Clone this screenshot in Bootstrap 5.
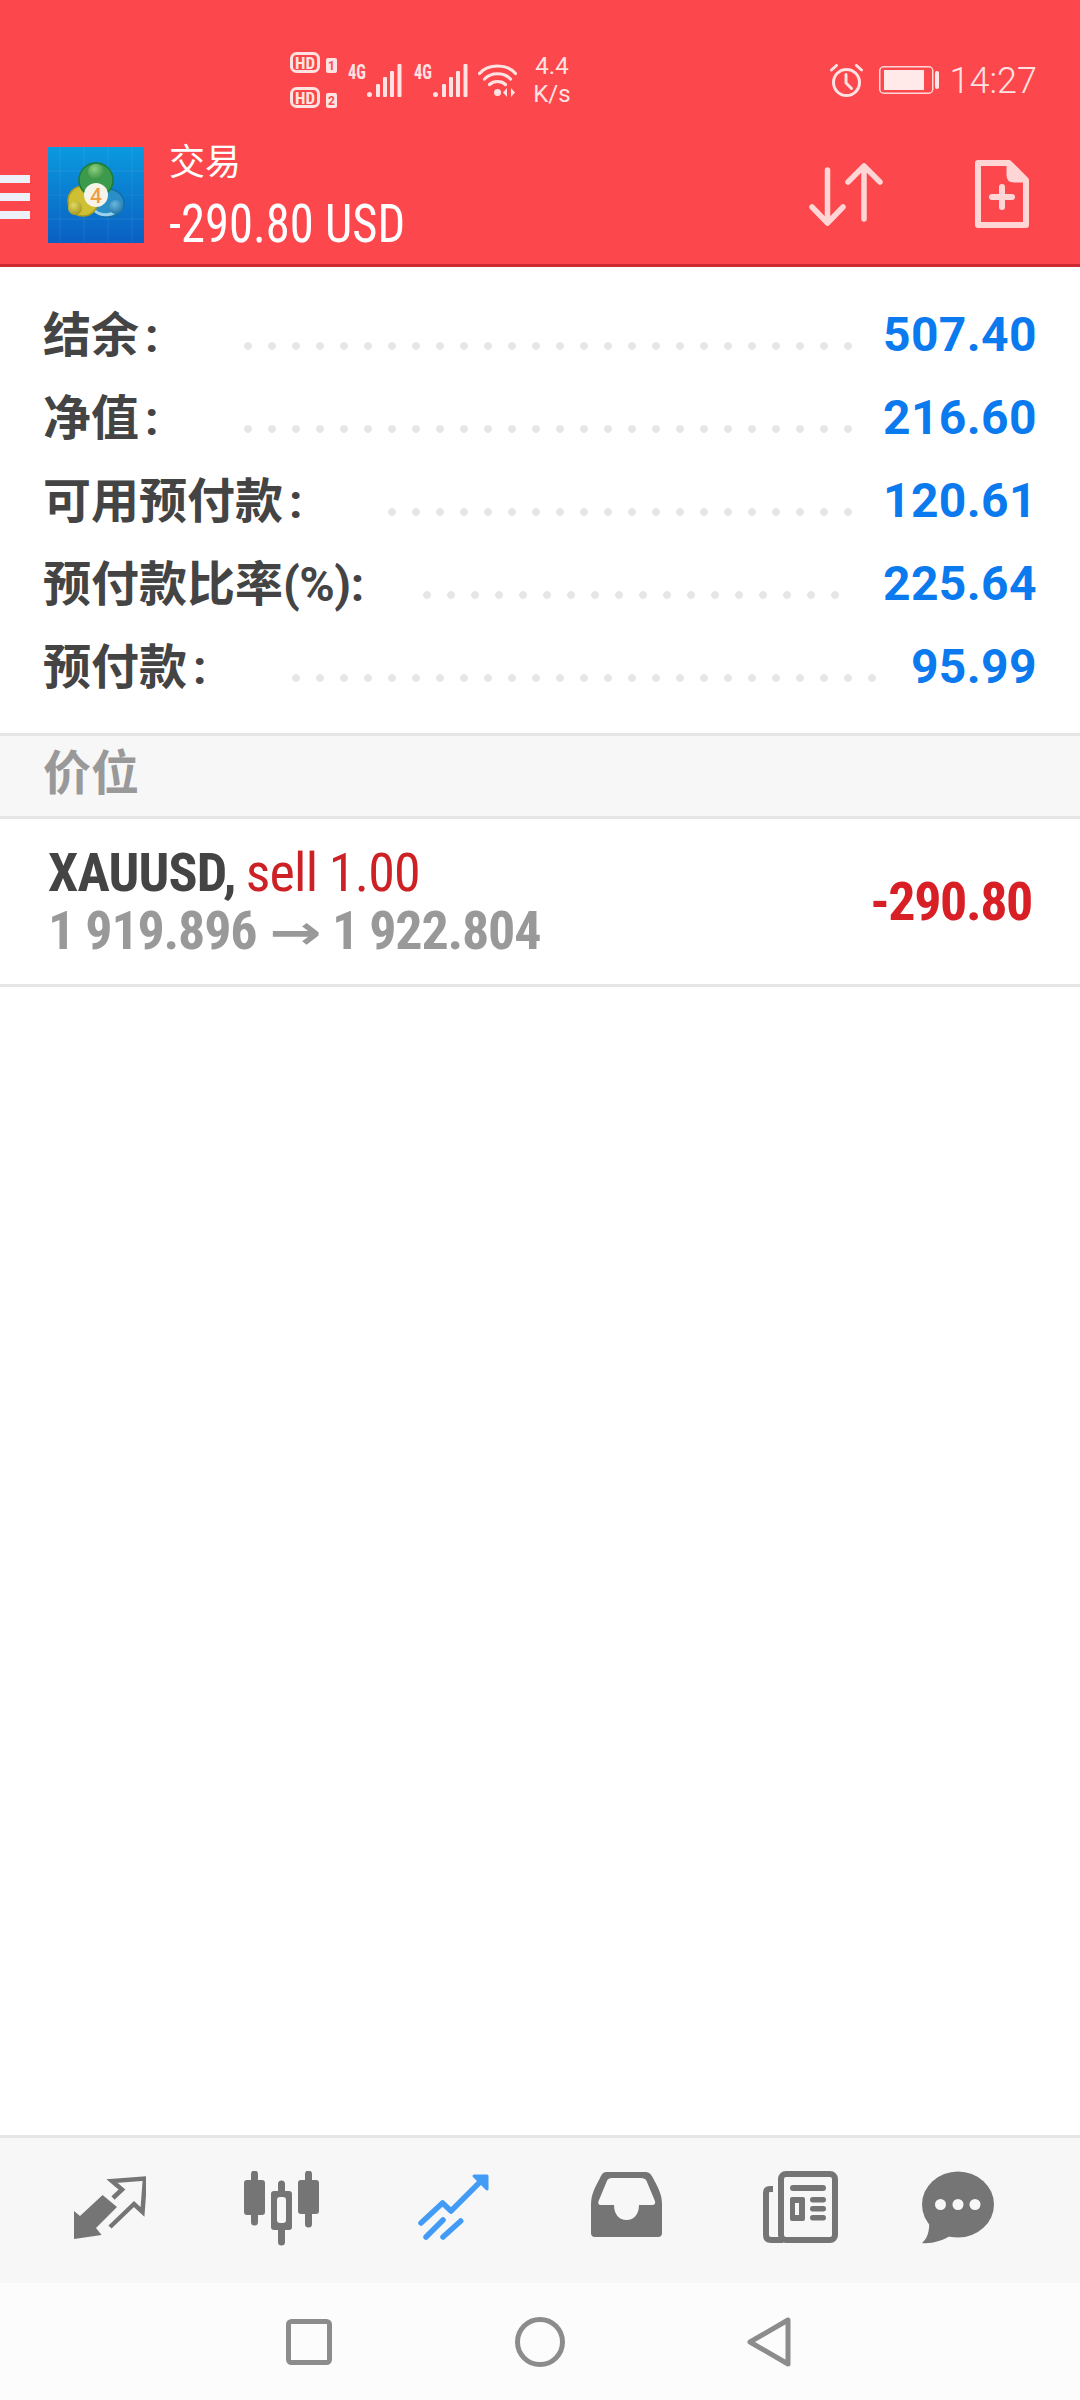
<!DOCTYPE html>
<html lang="zh">
<head>
<meta charset="utf-8">
<title>交易</title>
<link href="https://cdn.jsdelivr.net/npm/bootstrap@5.3.0/dist/css/bootstrap.min.css" rel="stylesheet">
<style>
html,body{width:1080px;height:2400px;margin:0;overflow:hidden}
body{font-family:Roboto,"Noto Sans CJK SC",sans-serif;background:#fff}
.shell{height:2400px}
.hdr{height:267px;background:#fc474c;border-bottom:3px solid #cc2b2f;color:#fff}
.sbar{height:130px;padding:30px 43px 0 290px}
.sbar svg{display:block;flex:none}
.sig{margin-top:-7px}
.narrowtxt{font-family:Roboto,sans-serif;font-stretch:75%;font-weight:700;font-size:20px}
.hdtxt{font-family:Roboto,sans-serif;font-stretch:75%;font-weight:700;font-size:17px}
.speed{font-size:24px;line-height:28px;color:#ffe2e2;text-align:center;margin-left:15px;width:40px}
.clock{font-size:36px;font-weight:300;color:#ffe2e2;line-height:1;margin-left:11px;margin-top:2px}
.alarm{margin-left:auto;margin-right:16px}
.tbar{height:132px;padding-right:51px}
.burger{width:30px;height:44px;margin-top:45px;background:linear-gradient(#edf0f8 8px,transparent 8px 18px,#edf0f8 18px 26px,transparent 26px 36px,#edf0f8 36px);flex:none}
.logo{margin:17px 0 0 18px;flex:none}
.ttl{margin:11px 0 0 25px}
.ttl1{font-size:36px;line-height:36px;font-family:"Noto Sans CJK SC",sans-serif;font-weight:400}
.ttl2{font-family:Roboto,sans-serif;font-stretch:75%;font-size:54px;line-height:54px;margin-top:20px;transform:scaleX(.9);transform-origin:0 50%;white-space:nowrap}
.acts{margin-top:30px;gap:90px;margin-left:auto}
.acc{padding:25px 43px 26px 43px}
.arow{height:83px}
.alabel{font-family:Roboto,"Noto Sans CJK SC",sans-serif;font-weight:700;font-size:48px;line-height:81px;padding-top:3px;color:#444;white-space:nowrap}
.alabel .colon{margin-left:6px}
.pct{letter-spacing:-.5px}
.leader{height:8px;margin-top:50px;margin-left:auto;flex:none;background:radial-gradient(circle,#e6e6e6 3.5px,transparent 4.2px) 0 0/24px 8px repeat-x}
.n26{width:624px;margin-right:23px}
.n20{width:480px;margin-right:23px}
.n18{width:432px;margin-right:36px}
.n25{width:600px;margin-right:27px}
.aval{font-weight:700;font-size:48px;line-height:83px;color:#0a7aee;flex:none;margin-top:1px;letter-spacing:.4px}
.sect{height:86px;background:#f7f7f7;border-top:3px solid #e6e6e6;border-bottom:3px solid #e6e6e6;padding-left:43px;font-family:"Noto Sans CJK SC",sans-serif;font-weight:700;font-size:48px;line-height:66px;color:#999}
.pos{height:168px;border-bottom:3px solid #e6e6e6;padding:0 48px 0 48px}
.pline{font-family:Roboto,sans-serif;font-stretch:75%;font-size:54px;line-height:58px;white-space:nowrap}
.first{letter-spacing:-.8px}
.sym{font-weight:700;color:#444}
.side{color:#cc2226;margin-left:10px}
.prc{font-weight:700;color:#999;letter-spacing:-1.2px}
.arrow{display:inline-block;font-family:"DejaVu Sans",sans-serif;font-stretch:normal;font-size:48px;line-height:48px;transform:scaleX(1.3);margin:0 7px}
.pl{font-family:Roboto,sans-serif;font-stretch:75%;font-weight:700;font-size:54px;color:#d81f26;letter-spacing:-1.4px}
.tabs{height:148px;background:#f7f7f7;border-top:3px solid #e6e6e6;padding-left:24px}
.tabs svg{flex:none;display:block}
.tabbox{width:172px;padding-top:33px}
.navb{height:117px;background:#fcfcfc;padding-left:286px}
</style>
</head>
<body>
<div class="shell d-flex flex-column">
  <header class="hdr">
    <div class="sbar d-flex align-items-center">
      <svg width="47" height="56" viewBox="0 0 47 56" fill="#ffe2e2">
        <rect x="1.5" y="1.5" width="27" height="18" rx="5" fill="none" stroke="#ffe2e2" stroke-width="3"/>
        <text x="15" y="16.500" text-anchor="middle" class="hdtxt">HD</text>
        <rect x="36" y="6" width="11" height="15" rx="2"/>
        <text x="41.500" y="18" text-anchor="middle" font-family="Roboto" font-weight="700" font-size="12" fill="#fc474c">1</text>
        <rect x="1.5" y="36.5" width="27" height="18" rx="5" fill="none" stroke="#ffe2e2" stroke-width="3"/>
        <text x="15" y="51.500" text-anchor="middle" class="hdtxt">HD</text>
        <rect x="36" y="41" width="11" height="15" rx="2"/>
        <text x="41.500" y="53" text-anchor="middle" font-family="Roboto" font-weight="700" font-size="12" fill="#fc474c">2</text>
      </svg>
      <svg class="sig" style="margin-left:11px" width="54" height="40" viewBox="0 -7 54 40" fill="#ffe2e2">
        <text x="0" y="15" class="narrowtxt" textLength="18" lengthAdjust="spacingAndGlyphs">4G</text>
        <rect x="19" y="28" width="5" height="5" rx="2.5"/><rect x="28" y="20" width="4" height="13" rx="1"/><rect x="35" y="13" width="4" height="20" rx="1"/><rect x="42" y="7" width="4" height="26" rx="1"/><rect x="49.500" y="0" width="4" height="33" rx="1"/>
      </svg>
      <svg class="sig" style="margin-left:12px" width="54" height="40" viewBox="0 -7 54 40" fill="#ffe2e2">
        <text x="0" y="15" class="narrowtxt" textLength="18" lengthAdjust="spacingAndGlyphs">4G</text>
        <rect x="19" y="28" width="5" height="5" rx="2.5"/><rect x="28" y="20" width="4" height="13" rx="1"/><rect x="35" y="13" width="4" height="20" rx="1"/><rect x="42" y="7" width="4" height="26" rx="1"/><rect x="49.500" y="0" width="4" height="33" rx="1"/>
      </svg>
      <svg style="margin-left:10px" width="39" height="33" viewBox="0 0 39 33" fill="none" stroke="#ffe2e2" stroke-width="3.200" stroke-linecap="round">
        <path d="M1.500 9.500C10 -0.500 29 -0.500 37.500 9.500"/><path d="M6.500 15C13 8 26 8 32.500 15"/><path d="M11.500 20.500C15.500 16.500 23.500 16.500 27.500 20.500"/>
        <circle cx="19.500" cy="28.500" r="3.500" fill="#ffe2e2" stroke="none"/>
        <path d="M29 24l-4 4.500 4 4.500zM33 24l4 4.500-4 4.500z" fill="#ffe2e2" stroke="none"/>
      </svg>
      <div class="speed">4.4<br>K/s</div>
      <svg class="alarm" width="33" height="33" viewBox="0 0 33 33" fill="none" stroke="#ffe2e2" stroke-width="3" stroke-linecap="round">
        <circle cx="16.500" cy="18.500" r="13"/><path d="M16 10.500v8.500l5.500 5.500"/><path d="M1.500 6l5-4.500M31.500 6l-5-4.500"/>
      </svg>
      <svg width="60" height="28" viewBox="0 0 60 28" fill="#ffe9e9">
        <rect x="0.750" y="0.750" width="53" height="26.500" rx="4" fill="none" stroke="#ffd9d9" stroke-width="1.500"/>
        <rect x="5" y="4" width="40" height="20"/><rect x="56" y="5" width="4" height="18" rx="2"/>
      </svg>
      <div class="clock">14:27</div>
    </div>
    <div class="tbar d-flex align-items-start">
      <div class="burger"></div>
      <svg class="logo" width="96" height="96" viewBox="0 0 96 96">
        <defs>
          <linearGradient id="lg" x1="0" y1="0" x2="0" y2="1"><stop offset="0" stop-color="#0a9ade"/><stop offset="1" stop-color="#0a5fc2"/></linearGradient>
          <radialGradient id="gh" cx=".4" cy=".3" r=".8"><stop offset="0" stop-color="#8fcf7f"/><stop offset="1" stop-color="#2f8a3e"/></radialGradient>
          <radialGradient id="yh" cx=".4" cy=".3" r=".8"><stop offset="0" stop-color="#e0da60"/><stop offset="1" stop-color="#9a8f1a"/></radialGradient>
          <radialGradient id="bh" cx=".4" cy=".3" r=".8"><stop offset="0" stop-color="#6ab8dc"/><stop offset="1" stop-color="#176ea3"/></radialGradient>
        </defs>
        <rect width="96" height="96" fill="url(#lg)"/>
        <path d="M12 0V96M36 0V96M60 0V96M84 0V96M0 24H96M0 48H96M0 72H96" stroke="#fff" stroke-opacity=".07"/>
        <ellipse cx="60" cy="56" rx="16" ry="14" fill="#2a8fc7" stroke="#176ea3" stroke-width="1.500"/>
        <path d="M46 63C53 70 64 69 71 62" stroke="#9ad2ec" stroke-width="3" fill="none"/>
        <ellipse cx="35" cy="54" rx="15" ry="15" fill="#cfbf32" stroke="#a89a20" stroke-width="1.500"/>
        <ellipse cx="48" cy="33" rx="17" ry="17" fill="#3b9a4b" stroke="#1f7c38" stroke-width="1.500"/>
        <circle cx="48" cy="25" r="8" fill="url(#gh)"/>
        <circle cx="27" cy="61" r="7" fill="url(#yh)"/>
        <circle cx="68" cy="60" r="7" fill="url(#bh)"/>
        <circle cx="48" cy="48" r="12" fill="#f6f3ea"/>
        <text x="48" y="55.500" text-anchor="middle" font-family="Roboto" font-weight="500" font-size="21" fill="#ef9d45">4</text>
      </svg>
      <div class="ttl">
        <div class="ttl1">交易</div>
        <div class="ttl2">-290.80 USD</div>
      </div>
      <div class="acts d-flex align-items-start">
        <svg width="80" height="70" viewBox="0 0 80 70" fill="none" stroke="#ffd6d6" stroke-width="5.500" stroke-linecap="round" stroke-linejoin="round">
          <path d="M22.500 10V63M7 47L22.500 63 38 47"/><path d="M59 6V59M43 22L59 6 75 22"/>
        </svg>
        <svg width="54" height="68" viewBox="0 0 54 68" fill="none" stroke="#ffd6d6" stroke-width="6" stroke-linejoin="round" stroke-linecap="round">
          <path d="M3 3H34L51 20V65H3Z"/><path d="M33 3V15Q33 21 39 21H51L34 3Z" fill="#ffd6d6" stroke-width="3"/>
          <path d="M27 27V47M17 37H37"/>
        </svg>
      </div>
    </div>
  </header>

  <section class="acc">
    <div class="arow d-flex"><div class="alabel">结余<span class="colon">:</span></div><div class="leader n26"></div><div class="aval">507.40</div></div>
    <div class="arow d-flex"><div class="alabel">净值<span class="colon">:</span></div><div class="leader n26"></div><div class="aval">216.60</div></div>
    <div class="arow d-flex"><div class="alabel">可用预付款<span class="colon">:</span></div><div class="leader n20"></div><div class="aval">120.61</div></div>
    <div class="arow d-flex"><div class="alabel">预付款比率<span class="pct">(%):</span></div><div class="leader n18"></div><div class="aval">225.64</div></div>
    <div class="arow d-flex"><div class="alabel">预付款<span class="colon">:</span></div><div class="leader n25"></div><div class="aval">95.99</div></div>
  </section>

  <div class="sect">价位</div>

  <div class="pos d-flex align-items-center justify-content-between">
    <div>
      <div class="pline first"><span class="sym">XAUUSD,</span><span class="side">sell 1.00</span></div>
      <div class="pline prc">1 919.896 <span class="arrow">→</span> 1 922.804</div>
    </div>
    <div class="pl">-290.80</div>
  </div>

  <div class="flex-grow-1"></div>

  <nav class="tabs d-flex">
    <div class="tabbox d-flex justify-content-center"><svg width="72" height="70" viewBox="0 0 72 70" fill="#757575"><g transform="translate(0 6)"><path d="M0 62V34L6 39 28.600 18 43 30 22 51 27.600 58Z"/><path d="M39 21L48 12.500 38 4 71 1.500 68.500 35 60 27 36 50" fill="none" stroke="#757575" stroke-width="4.500"/></g></svg></div>
    <div class="tabbox d-flex justify-content-center"><svg width="76" height="75" viewBox="0 0 76 75" fill="#757575">
      <path d="M10.500 3V51M37.500 13V71M64.500 3V53" stroke="#757575" stroke-width="7" stroke-linecap="round"/>
      <rect x="0" y="9" width="21" height="35" rx="3"/><rect x="54" y="9" width="21" height="34" rx="3"/>
      <rect x="27" y="20" width="21" height="39" rx="3"/>
      <rect x="33" y="26" width="9" height="26" rx="3" fill="#f7f7f7"/>
    </svg></div>
    <div class="tabbox d-flex justify-content-center"><svg width="72" height="70" viewBox="0 0 72 70" fill="none" stroke="#429bf5" stroke-width="5.500" stroke-linecap="round" stroke-linejoin="round"><g transform="translate(0 2)"><path d="M3 50L24.500 30 33 38 66 5"/><path d="M56 3L69 3 69 16Z" fill="#429bf5" stroke-width="3"/><path d="M8 64L25 47M25 64L42.700 48"/></g></svg></div>
    <div class="tabbox d-flex justify-content-center"><svg width="72" height="70" viewBox="0 0 72 70" fill="#757575"><g transform="translate(1 0)"><path fill-rule="evenodd" d="M16 1H54C58 1 60 3 62 7 68 18 71 24 71 34V62A4 4 0 0 1 67 66H4A4 4 0 0 1 0 62V34C0 24 3 18 9 7 11 3 12 1 16 1ZM21 7C18 7 16.500 8 15.500 11L8 29C6.500 32 7.500 34 10 34H23C23 43 28 49 35.500 49 43 49 48 43 48 34H61C64 34 65 32 63.500 29L56 11C55 8 53 7 50 7Z"/></g></svg></div>
    <div class="tabbox d-flex justify-content-center"><svg style="margin-left:6px" width="76" height="74" viewBox="0 0 76 74" fill="#757575">
      <rect x="18" y="3" width="54" height="66" rx="5" fill="none" stroke="#757575" stroke-width="6"/>
      <path d="M10 18H7Q3 18 3 22V64Q3 69 8 69H20" fill="none" stroke="#757575" stroke-width="6"/>
      <rect x="27" y="14" width="36" height="6" rx="3"/>
      <path fill-rule="evenodd" d="M29 26H40a2 2 0 0 1 2 2V48a2 2 0 0 1-2 2H29a2 2 0 0 1-2-2V28a2 2 0 0 1 2-2ZM32 32V44H36V32Z"/>
      <rect x="47" y="26" width="16" height="5.500" rx="2.700"/><rect x="47" y="35" width="16" height="5.500" rx="2.700"/><rect x="47" y="44" width="16" height="5.500" rx="2.700"/>
    </svg></div>
    <div class="tabbox d-flex justify-content-center"><svg style="margin-right:24px" width="72" height="73" viewBox="0 0 72 73" fill="#757575">
      <ellipse cx="36" cy="33.500" rx="36" ry="33"/>
      <path d="M7 50C8 60 5 68 0 72 9 73 20 70 30 64Z"/>
      <circle cx="18.500" cy="33.500" r="5.500" fill="#f7f7f7"/><circle cx="36" cy="33.500" r="5.500" fill="#f7f7f7"/><circle cx="53" cy="33.500" r="5.500" fill="#f7f7f7"/>
    </svg></div>
  </nav>
  <nav class="navb d-flex align-items-center">
    <svg width="46" height="46" viewBox="0 0 46 46" fill="none" stroke="#8c8c8c" stroke-width="5"><rect x="2.500" y="2.500" width="41" height="41" rx="3"/></svg>
    <svg style="margin-left:183px" width="50" height="50" viewBox="0 0 50 50" fill="none" stroke="#8c8c8c" stroke-width="5"><circle cx="25" cy="25" r="22.500"/></svg>
    <svg style="margin-left:182px" width="44" height="50" viewBox="0 0 44 50" fill="none" stroke="#8c8c8c" stroke-width="5" stroke-linejoin="round"><path d="M3 25L41 3V47Z"/></svg>
  </nav>
</div>
<script src="https://cdn.jsdelivr.net/npm/bootstrap@5.3.0/dist/js/bootstrap.bundle.min.js"></script>
</body>
</html>
